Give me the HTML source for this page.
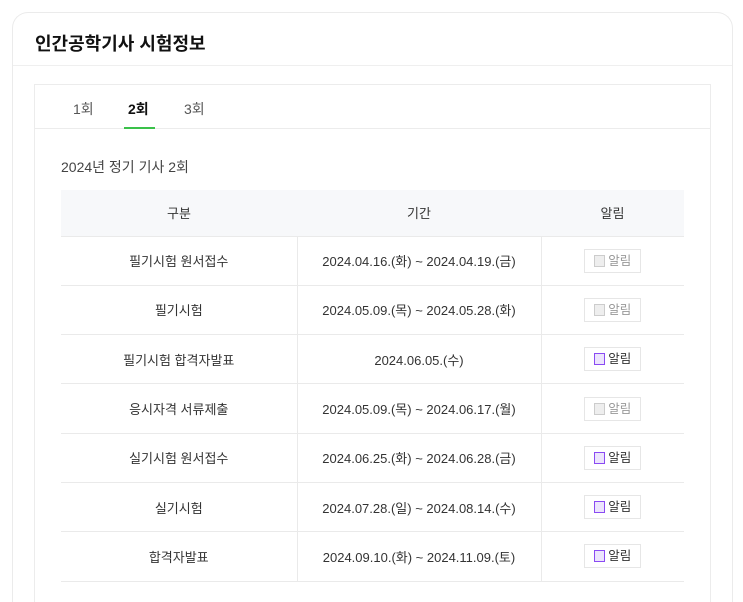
<!DOCTYPE html>
<html><head><meta charset="utf-8"><style>
*{box-sizing:border-box;margin:0;padding:0}
html,body{width:743px;height:602px;overflow:hidden}
body{background:#fff;font-family:"Liberation Sans","Noto Sans CJK KR",sans-serif;color:#333}
.wrap{position:relative;width:743px;height:602px;overflow:hidden}
.card{position:absolute;left:12px;top:12px;width:721px;height:600px;border:1px solid #ebebeb;border-bottom:none;border-radius:16px 16px 0 0;background:#fff}
.hd{height:53px;border-bottom:1px solid #efefef;padding:17px 0 0 22px;font-size:18px;font-weight:bold;color:#111}
.box{position:absolute;left:21px;top:71px;width:677px;height:530px;border:1px solid #ececec;border-bottom:none}
.tabs{height:44px;border-bottom:1px solid #ececec;position:relative;font-size:14px;color:#555}
.tabs span{position:absolute;top:14px}
.tabs .on{font-weight:bold;color:#111}
.ul{position:absolute;left:89px;top:42px;width:31px;height:2px;background:#3ac14a}
.sub{position:absolute;left:26px;top:72px;font-size:14px;color:#444}
table{position:absolute;left:26px;top:105px;width:623px;border-collapse:collapse;font-size:13px;color:#333}
th{height:46px;background:#f7f8fa;font-weight:normal;border-bottom:1px solid #eaeaea}
td{height:49.3px;border-bottom:1px solid #eaeaea;text-align:center}
td+td{border-left:1px solid #eaeaea}
.b{display:inline-block;width:57px;height:24px;border:1px solid #e6e6e6;font-size:12.5px;line-height:22px;color:#999;vertical-align:middle}
.b i{display:inline-block;width:11px;height:12px;border:1px solid #ccc;background:#eee;vertical-align:-2px;margin-right:3px}
.b.p{color:#333}.b.p i{border:1.5px solid #8a4af3;background:#ece4fd}
</style></head><body><div class="wrap">
<div class="card"><div class="hd">인간공학기사 시험정보</div>
<div class="box">
<div class="tabs"><span style="left:38px">1회</span><span class="on" style="left:93px">2회</span><span style="left:149px">3회</span><div class="ul"></div></div>
<div class="sub">2024년 정기 기사 2회</div>
<table>
<tr><th style="width:236px">구분</th><th style="width:244px">기간</th><th>알림</th></tr>
<tr><td>필기시험 원서접수</td><td>2024.04.16.(화) ~ 2024.04.19.(금)</td><td><span class="b"><i></i>알림</span></td></tr>
<tr><td>필기시험</td><td>2024.05.09.(목) ~ 2024.05.28.(화)</td><td><span class="b"><i></i>알림</span></td></tr>
<tr><td>필기시험 합격자발표</td><td>2024.06.05.(수)</td><td><span class="b p"><i></i>알림</span></td></tr>
<tr><td>응시자격 서류제출</td><td>2024.05.09.(목) ~ 2024.06.17.(월)</td><td><span class="b"><i></i>알림</span></td></tr>
<tr><td>실기시험 원서접수</td><td>2024.06.25.(화) ~ 2024.06.28.(금)</td><td><span class="b p"><i></i>알림</span></td></tr>
<tr><td>실기시험</td><td>2024.07.28.(일) ~ 2024.08.14.(수)</td><td><span class="b p"><i></i>알림</span></td></tr>
<tr><td>합격자발표</td><td>2024.09.10.(화) ~ 2024.11.09.(토)</td><td><span class="b p"><i></i>알림</span></td></tr>
</table>
</div></div>
</div></body></html>
